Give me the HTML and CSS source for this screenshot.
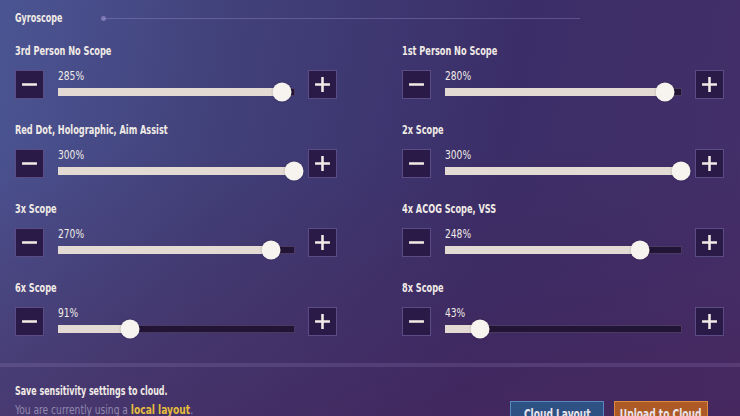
FILE: index.html
```html
<!DOCTYPE html>
<html lang="en">
<head>
    <meta charset="UTF-8">
    <meta name="viewport" content="width=device-width, initial-scale=1.0">
    <title>Sensitivity - Gyroscope</title>
    <link rel="stylesheet" href="styles.css">
</head>
<body>
    <div class="page">
        <div class="section-head">
            <span class="section-title">Gyroscope</span>
            <span class="section-line"></span>
        </div>

        <div class="settings">
            <!-- 3rd Person No Scope -->
            <div class="setting">
                <div class="setting-label">3rd Person No Scope</div>
                <div class="control">
                    <button class="step"><svg viewBox="0 0 16 16"><path d="M1 8h14"/></svg></button>
                    <div class="slider">
                        <div class="value">285%</div>
                        <div class="track"><div class="fill" style="width: 95%"></div><div class="thumb" style="left: 95%"></div></div>
                    </div>
                    <button class="step"><svg viewBox="0 0 16 16"><path d="M1 8h14M8 1v14"/></svg></button>
                </div>
            </div>

            <!-- 1st Person No Scope -->
            <div class="setting">
                <div class="setting-label">1st Person No Scope</div>
                <div class="control">
                    <button class="step"><svg viewBox="0 0 16 16"><path d="M1 8h14"/></svg></button>
                    <div class="slider">
                        <div class="value">280%</div>
                        <div class="track"><div class="fill" style="width: 93.3%"></div><div class="thumb" style="left: 93.3%"></div></div>
                    </div>
                    <button class="step"><svg viewBox="0 0 16 16"><path d="M1 8h14M8 1v14"/></svg></button>
                </div>
            </div>

            <!-- Red Dot -->
            <div class="setting">
                <div class="setting-label">Red Dot, Holographic, Aim Assist</div>
                <div class="control">
                    <button class="step"><svg viewBox="0 0 16 16"><path d="M1 8h14"/></svg></button>
                    <div class="slider">
                        <div class="value">300%</div>
                        <div class="track"><div class="fill" style="width: 100%"></div><div class="thumb" style="left: 100%"></div></div>
                    </div>
                    <button class="step"><svg viewBox="0 0 16 16"><path d="M1 8h14M8 1v14"/></svg></button>
                </div>
            </div>

            <!-- 2x Scope -->
            <div class="setting">
                <div class="setting-label">2x Scope</div>
                <div class="control">
                    <button class="step"><svg viewBox="0 0 16 16"><path d="M1 8h14"/></svg></button>
                    <div class="slider">
                        <div class="value">300%</div>
                        <div class="track"><div class="fill" style="width: 100%"></div><div class="thumb" style="left: 100%"></div></div>
                    </div>
                    <button class="step"><svg viewBox="0 0 16 16"><path d="M1 8h14M8 1v14"/></svg></button>
                </div>
            </div>

            <!-- 3x Scope -->
            <div class="setting">
                <div class="setting-label">3x Scope</div>
                <div class="control">
                    <button class="step"><svg viewBox="0 0 16 16"><path d="M1 8h14"/></svg></button>
                    <div class="slider">
                        <div class="value">270%</div>
                        <div class="track"><div class="fill" style="width: 90%"></div><div class="thumb" style="left: 90%"></div></div>
                    </div>
                    <button class="step"><svg viewBox="0 0 16 16"><path d="M1 8h14M8 1v14"/></svg></button>
                </div>
            </div>

            <!-- 4x Scope -->
            <div class="setting">
                <div class="setting-label">4x ACOG Scope, VSS</div>
                <div class="control">
                    <button class="step"><svg viewBox="0 0 16 16"><path d="M1 8h14"/></svg></button>
                    <div class="slider">
                        <div class="value">248%</div>
                        <div class="track"><div class="fill" style="width: 82.7%"></div><div class="thumb" style="left: 82.7%"></div></div>
                    </div>
                    <button class="step"><svg viewBox="0 0 16 16"><path d="M1 8h14M8 1v14"/></svg></button>
                </div>
            </div>

            <!-- 6x Scope -->
            <div class="setting">
                <div class="setting-label">6x Scope</div>
                <div class="control">
                    <button class="step"><svg viewBox="0 0 16 16"><path d="M1 8h14"/></svg></button>
                    <div class="slider">
                        <div class="value">91%</div>
                        <div class="track"><div class="fill" style="width: 30.3%"></div><div class="thumb" style="left: 30.3%"></div></div>
                    </div>
                    <button class="step"><svg viewBox="0 0 16 16"><path d="M1 8h14M8 1v14"/></svg></button>
                </div>
            </div>

            <!-- 8x Scope -->
            <div class="setting">
                <div class="setting-label">8x Scope</div>
                <div class="control">
                    <button class="step"><svg viewBox="0 0 16 16"><path d="M1 8h14"/></svg></button>
                    <div class="slider">
                        <div class="value">43%</div>
                        <div class="track"><div class="fill" style="width: 14.3%"></div><div class="thumb" style="left: 14.3%"></div></div>
                    </div>
                    <button class="step"><svg viewBox="0 0 16 16"><path d="M1 8h14M8 1v14"/></svg></button>
                </div>
            </div>
        </div>

        <div class="divider"></div>

        <div class="footer">
            <div class="footer-text">
                <p class="save-note">Save sensitivity settings to cloud.</p>
                <p class="layout-note">You are currently using a <span class="highlight">local layout</span>.</p>
            </div>
            <div class="footer-buttons">
                <button class="cloud-btn cloud-layout"><span>Cloud Layout</span></button>
                <button class="cloud-btn cloud-upload"><span>Upload to Cloud</span></button>
            </div>
        </div>
    </div>
</body>
</html>
```

FILE: styles.css
```css
:root {
    --text-color: #f1ebe6;
    --box-color: #2a1a48;
    --box-border: #5b4c85;
    --fill-color: #e2dad3;
    --track-color: #221434;
}

* {
    box-sizing: border-box;
}

html, body {
    margin: 0;
    height: 100%;
}

body {
    font-family: 'DejaVu Sans Condensed', 'Liberation Sans', sans-serif;
    color: var(--text-color);
    overflow: hidden;
    background:
        linear-gradient(180deg, rgba(0,0,0,0) 35%, rgba(72,32,82,0.45) 100%),
        linear-gradient(100deg, #4b5593 0%, #414079 30%, #3b2e68 65%, #442f69 100%);
}

/* game font is very narrow, squeeze the condensed face */
.section-title,
.setting-label,
.value,
.footer-text p {
    display: block;
    transform: scaleX(0.7);
    transform-origin: left center;
    white-space: nowrap;
}

.page {
    padding: 11px 16px 0 15px;
}

.section-head {
    display: flex;
    align-items: center;
    height: 14px;
    margin-bottom: 19px;
}

.section-title {
    font-size: 12px;
    font-weight: bold;
    line-height: 14px;
    width: 88px;
    transform: scaleX(0.74);
}

.section-line {
    position: relative;
    width: 477px;
    height: 1px;
    background: rgba(160,150,210,0.35);
}

.section-line::before {
    content: "";
    position: absolute;
    left: -2px;
    top: -2px;
    width: 5px;
    height: 5px;
    border-radius: 50%;
    background: rgba(160,150,210,0.6);
}

.settings {
    display: grid;
    grid-template-columns: 322px 322px;
    column-gap: 65px;
    row-gap: 24px;
}

.setting-label {
    font-size: 13px;
    font-weight: bold;
    line-height: 14px;
    margin-bottom: 12px;
}

.control {
    display: flex;
    align-items: flex-start;
    height: 29px;
}

.step {
    width: 29px;
    height: 29px;
    padding: 0;
    border: 1px solid var(--box-border);
    background-color: var(--box-color);
    display: flex;
    align-items: center;
    justify-content: center;
    cursor: pointer;
}

.step svg {
    width: 17px;
    height: 17px;
    stroke: var(--text-color);
    stroke-width: 2.4;
    fill: none;
}

.slider {
    width: 237px;
    margin: 0 13px 0 14px;
}

.value {
    font-size: 13px;
    line-height: 12px;
    height: 12px;
    margin-bottom: 6px;
    transform: scaleX(0.78);
}

.track {
    position: relative;
    height: 8px;
    background-color: var(--track-color);
    border: 1px solid rgba(150,130,190,0.35);
}

.fill {
    margin: -1px 0 0 -1px;
    height: 8px;
    background-color: var(--fill-color);
}

.thumb {
    position: absolute;
    top: 50%;
    width: 19px;
    height: 19px;
    border-radius: 50%;
    background-color: #f7f3ee;
    transform: translate(-50%, -50%);
    box-shadow: 0 0 2px rgba(0,0,0,0.3);
}

.divider {
    height: 4px;
    margin: 27px -16px 0 -15px;
    background: rgba(170,150,210,0.18);
}

.footer {
    display: flex;
    justify-content: space-between;
    align-items: flex-start;
}

.footer-text p {
    margin: 0;
    font-size: 13px;
    line-height: 14px;
}

.footer-text .save-note {
    margin-top: 17px;
    font-weight: bold;
    transform: scaleX(0.68);
}

.footer-text .layout-note {
    margin-top: 5px;
    color: #9189ae;
    transform: scaleX(0.78);
}

.highlight {
    color: #e5bd3c;
    font-weight: bold;
}

.footer-buttons {
    display: flex;
    gap: 10px;
    margin-top: 34px;
    margin-right: 16px;
}

.cloud-btn {
    width: 94px;
    height: 28px;
    padding: 4px 0 0;
    display: flex;
    justify-content: center;
    align-items: flex-start;
    font-family: inherit;
    font-size: 14px;
    font-weight: bold;
    color: #e9e3ea;
    cursor: pointer;
}

.cloud-btn span {
    flex: none;
    white-space: nowrap;
    transform: scaleX(0.72);
}

.cloud-layout {
    background-color: #2e5184;
    border: 1px solid #5a86bf;
}

.cloud-upload {
    background-color: #ad5a27;
    border: 1px solid #dc8a3e;
}
```
